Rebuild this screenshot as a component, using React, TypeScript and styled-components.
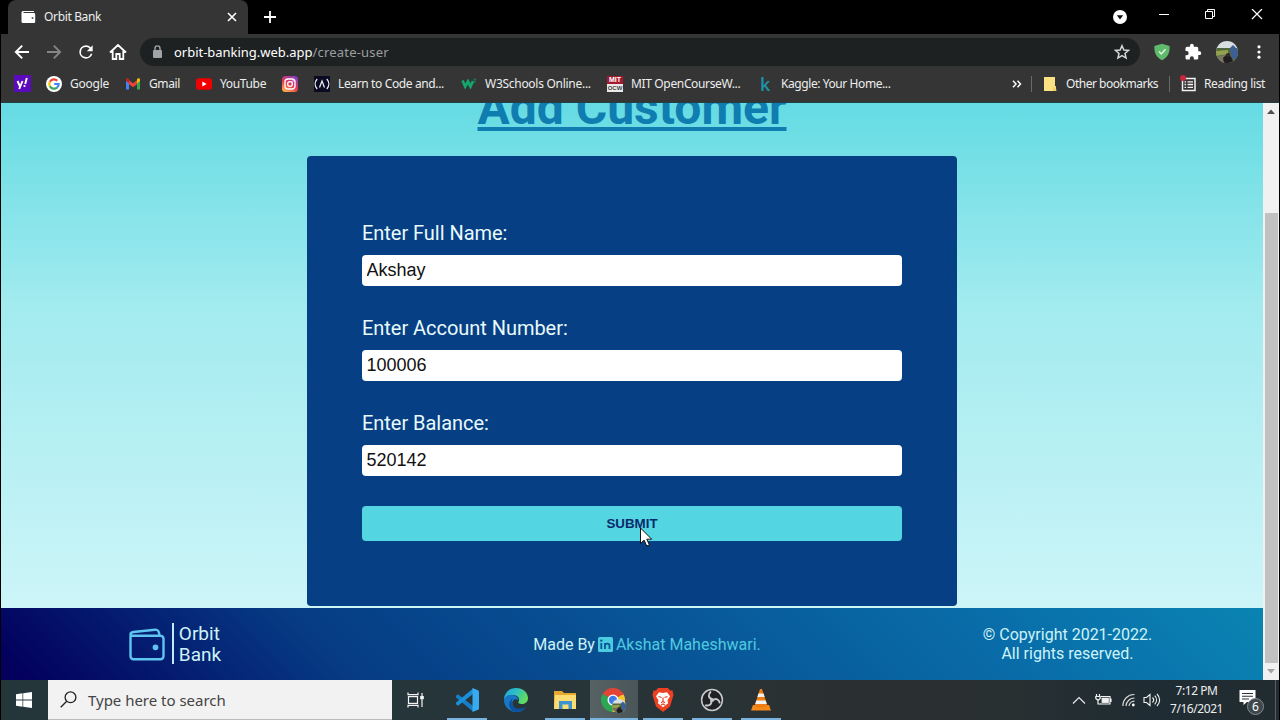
import React from 'react';
import styled, { createGlobalStyle } from 'styled-components';

const Global = createGlobalStyle`
  * { box-sizing: border-box; }
  body { margin: 0; background: #000; overflow: hidden; }
  svg { display: block; flex: none; }
`;

const ui = "'Noto Sans', 'Open Sans', sans-serif";

const Screen = styled.div`
  position: relative;
  width: 1280px;
  height: 720px;
  padding: 0 1px;
  display: flex;
  flex-direction: column;
  background: #000;
  overflow: hidden;
  font-family: ${ui};
`;

/* ---------- browser chrome ---------- */

const TabStrip = styled.div`
  height: 34px;
  flex: none;
  display: flex;
  background: #000;
`;

const Tab = styled.div`
  margin-left: 7px;
  width: 240px;
  display: flex;
  align-items: center;
  padding: 0 11px 0 13px;
  border-radius: 8px 8px 0 0;
  background: #353535;
`;

const Text = styled.span<{ $size: number; $space?: number; $color?: string }>`
  font-size: ${p => p.$size}px;
  letter-spacing: ${p => p.$space ?? 0}px;
  color: ${p => p.$color ?? '#eceeee'};
  flex: none;
  white-space: nowrap;
  line-height: 18px;
`;

const Grow = styled.div`
  flex: 1;
`;

const Gap = styled.div<{ $w: number }>`
  width: ${p => p.$w}px;
  flex: none;
`;

const NewTab = styled.div`
  width: 44px;
  display: flex;
  align-items: center;
  justify-content: center;
`;

const WindowButtons = styled.div`
  display: flex;
  align-items: center;
  padding-right: 16px;
`;

const Toolbar = styled.div`
  height: 36px;
  flex: none;
  display: flex;
  align-items: center;
  padding: 0 13px 0 5px;
  background: #353535;
`;

const NavButtons = styled.div`
  display: flex;
  width: 134px;
`;

const NavButton = styled.div`
  width: 32px;
  height: 28px;
  display: flex;
  align-items: center;
  justify-content: center;
`;

const AddressBar = styled.div`
  width: 1000px;
  height: 28px;
  display: flex;
  align-items: center;
  padding: 0 9px 0 11px;
  border-radius: 14px;
  background: #1e2122;
`;

const UrlLine = styled.div`
  margin-left: 11px;
  display: flex;
`;

const Extensions = styled.div`
  display: flex;
  align-items: center;
  flex: 1;
  justify-content: space-between;
  padding-left: 14px;
`;

const BookmarkBar = styled.div`
  height: 33px;
  flex: none;
  display: flex;
  align-items: center;
  padding: 0 0 5px 13px;
  background: #353535;
  border-bottom: 1px solid #234145;
`;

const Bookmark = styled.div<{ $w: number; $gap?: number }>`
  width: ${p => p.$w}px;
  flex: none;
  display: flex;
  align-items: center;
  gap: ${p => p.$gap ?? 8}px;
`;

const Divider = styled.div<{ $mr: number }>`
  width: 1px;
  height: 16px;
  margin-right: ${p => p.$mr}px;
  background: #6a6a6a;
`;

/* ---------- web page ---------- */

const Viewport = styled.div`
  height: 577px;
  flex: none;
  display: flex;
`;

const Page = styled.div`
  flex: 1;
  display: flex;
  flex-direction: column;
  overflow: hidden;
  font-family: Roboto, sans-serif;
`;

const Main = styled.main`
  height: 505px;
  flex: none;
  display: flex;
  flex-direction: column;
  align-items: center;
  overflow: hidden;
  background: linear-gradient(#65dbe3 0%, #a2ebef 40%, #cdf5f8 100%);
`;

const Title = styled.h1`
  margin: -23px 0 0;
  height: 76px;
  flex: none;
  line-height: 56px;
  font-size: 48px;
  font-weight: 700;
  color: #0f7db0;
  text-decoration: underline;
  text-decoration-thickness: 4px;
  text-underline-offset: 3px;
  text-decoration-skip-ink: none;
`;

const Form = styled.form`
  width: 650px;
  height: 450px;
  flex: none;
  padding: 62px 55px;
  border-radius: 4px;
  background: #063f84;
`;

const Field = styled.label`
  display: flex;
  flex-direction: column;
  height: 95px;
`;

const Caption = styled.span`
  height: 37px;
  line-height: 30px;
  font-size: 20px;
  letter-spacing: -0.04px;
  color: #e9fafb;
`;

const Input = styled.input`
  width: 540px;
  height: 31px;
  padding: 0 4.5px;
  border: 0;
  border-radius: 4px;
  outline: 0;
  background: #fff;
  color: #111;
  font: 18px 'Liberation Sans', Arial, sans-serif;
`;

const Submit = styled.button`
  display: block;
  width: 540px;
  height: 35px;
  margin-top: 3px;
  padding: 0 0 1px;
  border: 0;
  border-radius: 4px;
  background: #53d6e1;
  color: #0a2a6c;
  font: bold 13.33px 'Liberation Sans', Arial, sans-serif;
`;

const Footer = styled.footer`
  height: 72px;
  display: flex;
  align-items: center;
  background: linear-gradient(45deg, #03005e 2%, #063c84 27%, #085596 53%, #096faa 80%, #0a84b2 100%);
`;

const FooterCell = styled.div`
  display: flex;
  align-items: center;
  justify-content: center;
  font-size: 16px;
  line-height: 19px;
  color: #cdf3f8;
`;

const Brand = styled(FooterCell)`
  width: 348px;
  gap: 7px;
`;

const BrandName = styled.div`
  height: 41px;
  margin-top: -1px;
  padding-left: 5px;
  border-left: 2px solid #c2eaf6;
  font-size: 19px;
  line-height: 21px;
`;

const Credit = styled(FooterCell)`
  width: 596px;
  gap: 3px;
`;

const Link = styled.a`
  display: flex;
  align-items: center;
  gap: 3px;
  color: #4dcbe0;
`;

const Copyright = styled(FooterCell)`
  width: 245px;
  text-align: center;
`;

const ScrollTrack = styled.div`
  width: 16px;
  display: flex;
  flex-direction: column;
  align-items: center;
  justify-content: space-between;
  padding: 6px 0;
  background: #f1f1f1;
`;

const ScrollThumb = styled.div`
  width: 13px;
  height: 450px;
  margin-top: 92px;
  background: #c1c1c1;
`;

/* ---------- taskbar ---------- */

const Taskbar = styled.div`
  height: 40px;
  flex: none;
  display: flex;
  background: linear-gradient(90deg, #25363b 0%, #27353a 45%, #2a3031 65%, #293031 78%, #1f2c33 90%, #222c31 100%);
`;

const Start = styled.div`
  width: 47px;
  padding-right: 1px;
  display: flex;
  align-items: center;
  justify-content: center;
`;

const Search = styled.div`
  width: 344px;
  display: flex;
  align-items: center;
  gap: 11px;
  padding-left: 12px;
  background: #f2f2f2;
  border-bottom: 1px solid #bbb;
`;

const TaskView = styled.div`
  width: 50px;
  padding-right: 3px;
  display: flex;
  align-items: center;
  justify-content: center;
`;

const TaskApp = styled.div<{ $active?: boolean; $open?: boolean }>`
  width: ${p => (p.$active ? 48 : 49)}px;
  margin-left: ${p => (p.$active ? 1 : 0)}px;
  display: flex;
  flex-direction: column;
  align-items: center;
  justify-content: space-between;
  padding-top: 8px;
  background: ${p => (p.$active ? 'linear-gradient(90deg, #566263, #4a5557)' : 'transparent')};

  &::after {
    content: '';
    width: ${p => (p.$active ? 48 : 40)}px;
    height: 2px;
    background: ${p => (p.$open ? '#79b4e0' : 'transparent')};
  }
`;

const Tray = styled.div`
  margin-left: auto;
  display: flex;
  align-items: center;
`;

const Clock = styled.div`
  width: 71px;
  display: flex;
  flex-direction: column;
  align-items: center;
`;

const ShowDesktop = styled.div`
  width: 4px;
  height: 40px;
  margin-left: 11px;
  border-left: 1px solid #566065;
`;

const Notice = styled.div`
  position: relative;
  width: 25px;
  height: 26px;
`;

const Count = styled.span`
  position: absolute;
  right: 0;
  bottom: -2px;
  width: 17px;
  height: 17px;
  border: 1px solid #858b8e;
  border-radius: 50%;
  background: #3e474c;
  color: #fff;
  font-size: 12px;
  line-height: 15px;
  text-align: center;
`;

const Pointer = styled.div`
  position: absolute;
  left: 639px;
  top: 527px;
`;

/* ---------- icons ---------- */

const line = { fill: 'none', stroke: '#fff', strokeWidth: 1.8 } as const;

const WalletTab = () => (
  <svg width="15" height="14" viewBox="0 0 15 14">
    <path d="M2 1h11v1H2.5v1H13a1.2 1.2 0 0 1 1.2 1.2v7.5A1.2 1.2 0 0 1 13 13H2a1.5 1.5 0 0 1-1.500-1.500v-9A1.500 1.500 0 0 1 2 1z" fill="#fff" />
    <circle cx="11.5" cy="8" r="1" fill="#555" />
  </svg>
);

const Back = () => (
  <svg width="16" height="16" viewBox="0 0 16 16">
    <path d="M15 8H2M8.2 1.6L1.8 8l6.4 6.4" {...line} strokeWidth="1.9" />
  </svg>
);

const Forward = () => (
  <svg width="16" height="16" viewBox="0 0 16 16">
    <path d="M1 8h13M7.8 1.6L14.2 8l-6.4 6.4" fill="none" stroke="#858585" strokeWidth="1.8" />
  </svg>
);

const Reload = () => (
  <svg width="20" height="20" viewBox="0 0 24 24">
    <path d="M17.65 6.35A7.96 7.96 0 0 0 12 4a8 8 0 1 0 7.73 10h-2.08A6 6 0 1 1 12 6c1.66 0 3.14.69 4.22 1.78L13 11h7V4l-2.35 2.35z" fill="#fff" />
  </svg>
);

const Home = () => (
  <svg width="18" height="18" viewBox="0 0 18 18">
    <path d="M1 9.5L9 2l8 7.5M3.7 8v8h3.6v-5h3.4v5h3.6V8" {...line} />
  </svg>
);

const Lock = () => (
  <svg width="12" height="14" viewBox="0 0 12 14">
    <rect x="2" y="5" width="9" height="8" rx="1" fill="#a0a4a7" />
    <path d="M4 6V3.4a2.5 2.5 0 0 1 5 0V6" fill="none" stroke="#a0a4a7" strokeWidth="1.4" />
  </svg>
);

const Star = () => (
  <svg width="18" height="18" viewBox="0 0 24 24">
    <path d="M12 3.6l2.5 5.7 6.2.6-4.7 4.1 1.4 6.1L12 16.9l-5.4 3.2L8 14 3.3 9.9l6.2-.6z" fill="none" stroke="#d5d7d9" strokeWidth="2" />
  </svg>
);

const Shield = () => (
  <svg width="16" height="18" viewBox="0 0 16 18">
    <path d="M8 .8l7.6 2.1c.4 6-1.300 11-7.600 14.400C1.700 13.900 0 8.900.4 2.900z" fill="#5fbb6b" />
    <path d="M5 8.500l2.300 2.400L11.500 6.200" fill="none" stroke="#e4f6e5" strokeWidth="1.500" />
  </svg>
);

const Puzzle = () => (
  <svg width="18" height="18" viewBox="0 0 24 24">
    <path d="M20.500 11H19V7a2 2 0 0 0-2-2h-4V3.500a2.500 2.500 0 0 0-5 0V5H4a2 2 0 0 0-2 2v3.800h1.500a2.700 2.700 0 0 1 0 5.400H2V20a2 2 0 0 0 2 2h3.800v-1.500a2.700 2.700 0 0 1 5.400 0V22H17a2 2 0 0 0 2-2v-4h1.500a2.500 2.500 0 0 0 0-5z" fill="#fff" />
  </svg>
);

const Avatar = ({ size }: { size: number }) => (
  <svg width={size} height={size} viewBox="0 0 22 22">
    <clipPath id={`face${size}`}><circle cx="11" cy="11" r="11" /></clipPath>
    <g clipPath={`url(#face${size})`}>
      <rect width="22" height="22" fill="#d8dde0" />
      <path d="M0 7h22v15H0z" fill="#51663c" />
      <path d="M0 10l12-1v4L0 15z" fill="#93a04e" />
      <path d="M0 16l12-3 2 9H0z" fill="#77775f" />
      <path d="M14 7l3-3 3 3 2 3v7l-6 1z" fill="#3c5f96" />
      <path d="M7 17l3-3 2-1 3 3 3 6H8z" fill="#201c20" />
      <circle cx="12" cy="14" r="2" fill="#30262a" />
    </g>
  </svg>
);

const Yahoo = () => (
  <svg width="17" height="17" viewBox="0 0 17 17">
    <rect width="17" height="17" fill="#5b0bbd" />
    <path d="M3.500 6l2.300 5M8.500 6l-3.300 8M12.800 3l-1.600 6" stroke="#fff" strokeWidth="1.900" fill="none" />
    <circle cx="10.500" cy="11" r="1.100" fill="#fff" />
  </svg>
);

const GoogleG = () => (
  <svg width="16" height="16" viewBox="0 0 16 16">
    <circle cx="8" cy="8" r="8" fill="#fff" />
    <g fill="none" strokeWidth="2.200">
      <path d="M11.300 4.700A4.700 4.700 0 0 0 3.900 5.700" stroke="#ea4335" />
      <path d="M3.900 5.700a4.700 4.700 0 0 0 0 4.600" stroke="#fbbc05" />
      <path d="M3.900 10.300a4.700 4.700 0 0 0 7.100 1.300" stroke="#34a853" />
      <path d="M11 11.600A4.700 4.700 0 0 0 12.700 8H8.200" stroke="#4285f4" />
    </g>
  </svg>
);

const GmailM = () => (
  <svg width="16" height="16" viewBox="0 0 16 16">
    <path d="M1 13.500V4l3 2.300v7.200z" fill="#4285f4" />
    <path d="M12 13.500V6.300L15 4v9.500z" fill="#34a853" />
    <path d="M4 10V4.200l4 3 4-3V10l-4 3z" fill="#ea4335" />
    <path d="M1 5V3.700c0-1.400 1.500-1.900 3-.7v4.300z" fill="#c5221f" />
    <path d="M15 5V3.700c0-1.400-1.500-1.900-3-.7v4.300z" fill="#fbbc04" />
    <path d="M4 13.500V8.200l4 3 4-3v5.300z" fill="#353535" />
  </svg>
);

const YouTube = () => (
  <svg width="16" height="16" viewBox="0 0 16 16">
    <rect y="2.300" width="16" height="11.400" rx="2.500" fill="#f00000" />
    <path d="M6.300 5.500v5l4.400-2.500z" fill="#fff" />
  </svg>
);

const Instagram = () => (
  <svg width="16" height="16" viewBox="0 0 16 16">
    <defs>
      <linearGradient id="insta" x1="0.200" y1="1" x2="0.800" y2="0">
        <stop offset="0" stopColor="#fdb44e" />
        <stop offset=".45" stopColor="#e8394f" />
        <stop offset="1" stopColor="#8a3ac8" />
      </linearGradient>
    </defs>
    <rect width="16" height="16" rx="3.500" fill="url(#insta)" />
    <rect x="3" y="3" width="10" height="10" rx="3" fill="none" stroke="#fff" strokeWidth="1.300" />
    <circle cx="8" cy="8" r="2.400" fill="none" stroke="#fff" strokeWidth="1.300" />
    <circle cx="11" cy="5" r=".7" fill="#fff" />
  </svg>
);

const CodeCamp = () => (
  <svg width="16" height="16" viewBox="0 0 16 16">
    <rect width="16" height="16" fill="#0a0a23" />
    <path d="M3.200 3c-2.700 3-2.700 7 0 10M12.800 3c2.700 3 2.700 7 0 10M5.500 11.500L8 5l2.500 6.500" fill="none" stroke="#e8e8f0" strokeWidth="1.300" />
  </svg>
);

const W3 = () => (
  <svg width="16" height="16" viewBox="0 0 16 16">
    <path d="M1.500 4.500l2.700 6L7 5.500l2.500 5 2.500-5.500" fill="none" stroke="#12a86c" strokeWidth="2.700" />
    <path d="M12.500 3.200h2.500l-1.500 1.500c1.500 0 1.500 2-.5 1.700" fill="none" stroke="#0d8f5e" strokeWidth="1" />
  </svg>
);

const MitBox = styled.div`
  width: 16px;
  height: 16px;
  flex: none;
  display: flex;
  flex-direction: column;
  background: #a51931;
`;

const MitLine = styled.div<{ $lower?: boolean }>`
  height: 8px;
  font: bold ${p => (p.$lower ? 6 : 7)}px/8px 'Liberation Sans', Arial, sans-serif;
  text-align: center;
  color: ${p => (p.$lower ? '#444' : '#fff')};
  background: ${p => (p.$lower ? '#e9e9e9' : 'transparent')};
`;

const KaggleMark = styled.span`
  width: 16px;
  padding-left: 3px;
  font: 600 18px/16px 'Open Sans', sans-serif;
  color: #1f93a8;
`;

const Folder = () => (
  <svg width="14" height="16" viewBox="0 0 14 16">
    <path d="M1 1h11v9h.8l.6 5H1z" fill="#fbe183" />
    <path d="M10.500 10l2.800 5h-3z" fill="#f0ca58" />
  </svg>
);

const ReadingList = () => (
  <svg width="18" height="18" viewBox="0 0 18 18">
    <rect x="2.500" y="3.500" width="12.500" height="12" fill="none" stroke="#f1f1f1" strokeWidth="1.500" />
    <path d="M7.500 6.800H13M7.500 9.500H13M7.500 12.300H13M4.500 6.800h1.600M4.500 9.500h1.600M4.500 12.300h1.600" stroke="#f1f1f1" strokeWidth="1.300" />
    <circle cx="3" cy="3" r="3" fill="#c4283c" />
  </svg>
);

const WalletOutline = () => (
  <svg width="36" height="33" viewBox="0 0 36 33" fill="none" stroke="#5ec5f2" strokeWidth="2.400" strokeLinecap="round">
    <path d="M1.500 7v20.500a3 3 0 0 0 3 3h27a3 3 0 0 0 3-3v-17.500a3 3 0 0 0-3-3H4.500C.5 7 .5 3.800 4.500 3.200L26 .9c2.500-.3 4 1.500 4.500 5.300" transform="translate(0 .8)" />
    <circle cx="26.500" cy="19.300" r="1.700" fill="#5ec5f2" />
  </svg>
);

const LinkedIn = () => (
  <svg width="15" height="15" viewBox="0 0 15 15">
    <rect width="15" height="15" rx="1.500" fill="#4dcbe0" />
    <path d="M3.300 6v6M7 6v6M7 8.500c0-2.600 4.500-2.600 4.500 0V12" fill="none" stroke="#085696" strokeWidth="1.800" />
    <circle cx="3.300" cy="3.600" r="1.200" fill="#085696" />
  </svg>
);

const Windows = () => (
  <svg width="16" height="16" viewBox="0 0 16 16" fill="#fff">
    <path d="M0 2.200L6.500 1.300V7.600H0zM7.200 1.200L16 0v7.600H7.200zM0 8.400h6.500v6.300L0 13.800zM7.200 8.400H16V16l-8.800-1.200z" />
  </svg>
);

const Magnifier = () => (
  <svg width="17" height="17" viewBox="0 0 17 17" fill="none" stroke="#222" strokeWidth="1.300">
    <circle cx="10.500" cy="6.300" r="5.400" />
    <path d="M6.700 10.200L.7 16.200" />
  </svg>
);

const TaskViewIcon = () => (
  <svg width="17" height="16" viewBox="0 0 17 16" fill="none" stroke="#f4f4f4" strokeWidth="1.200">
    <rect x="1.500" y="4.600" width="9" height="6.800" />
    <path d="M1 .5v2.200h10V.5M1 15.500v-2.200h10v2.200M15 1v14" />
    <rect x="13.800" y="4.600" width="2.400" height="2" fill="#fff" />
  </svg>
);

const VSCode = () => (
  <svg width="24" height="24" viewBox="0 0 24 24">
    <path d="M1 7.800l2-1.500L18 18v5.500L1 9.500z" fill="#1680c7" />
    <path d="M1 16.200l2 1.500L18 6V.5L1 14.500z" fill="#1b8fd8" />
    <path d="M17.500 0L23 2.300q1 .5 1 1.500v16.400q0 1-1 1.500L17.500 24z" fill="#38aaf0" />
  </svg>
);

const Edge = () => (
  <svg width="24" height="24" viewBox="0 0 24 24">
    <defs>
      <linearGradient id="edgeTop" x1="0" y1="0" x2="1" y2=".4">
        <stop offset="0" stopColor="#239fd9" />
        <stop offset=".5" stopColor="#2dbfc9" />
        <stop offset="1" stopColor="#60dc5e" />
      </linearGradient>
    </defs>
    <path d="M0 12C0 5 5 0 12 0s12 4.600 12 10c0 4-3 6-6.500 6-2.800 0-3.700-1-3-2.200C16.500 10.500 13.500 7 9 7c-5 0-8.500 3-9 5z" fill="url(#edgeTop)" />
    <path d="M0 12c1-3.700 5-6 9-5 4 1 5.500 3.500 5.500 5.300C10 9 7 14 9 18c2.200 4 8 4.500 12.500 1.200C18 24.500 12 25 7.500 23 3 21 0 17 0 12z" fill="#1779c6" />
    <path d="M9 10c-3.500 5 .5 11 6 10.500 2.500 0 4.500-.5 6.700-1.500-3 4.500-8 6-13 4.200C4 20 4 13 9 10z" fill="#0d509d" />
  </svg>
);

const Explorer = () => (
  <svg width="24" height="24" viewBox="0 0 24 24">
    <path d="M1 3h8l2 2h12v16H1z" fill="#e6a92f" />
    <path d="M2 7h21v14H1z" fill="#fbdc73" />
    <path d="M6 21v-8h13v8h-3.500v-4.500h-6V21z" fill="#3c93cf" />
  </svg>
);

const Chrome = () => (
  <svg width="26" height="25" viewBox="0 0 26 25">
    <path d="M12 12L1.600 6A12 12 0 0 1 22.400 6z" fill="#e24435" />
    <path d="M12 12l-.5 12A12 12 0 0 1 1.600 6z" fill="#2da652" />
    <path d="M12 12L22.400 6a12 12 0 0 1-10.900 18z" fill="#f6c62e" />
    <path d="M12 6h10.500" stroke="#e24435" strokeWidth="2" />
    <circle cx="12" cy="12" r="5.500" fill="#fff" />
    <circle cx="12" cy="12" r="4.200" fill="#3e7de8" />
    <g transform="translate(11 11)"><Avatar size={14} /></g>
  </svg>
);

const Brave = () => (
  <svg width="22" height="24" viewBox="0 0 22 24">
    <path d="M6 0h10l2 2.500h2.500L21.500 7 18 18.500 11 24 4 18.500.5 7l1-4.500H4z" fill="#ee4023" />
    <path d="M11 5l4-.7 3 4-2.500 4 .6 3-5.100 4-5.100-4 .6-3L4 8.300l3-4z" fill="#fff" />
    <path d="M6.500 8.500l3 1M15.500 8.500l-3 1M11 9.500v4l-2 1.200M11 13.500l2 1.200M9 17l2-1 2 1" stroke="#ee4023" strokeWidth="1.200" fill="none" />
  </svg>
);

const Obs = () => (
  <svg width="24" height="24" viewBox="0 0 24 24">
    <circle cx="12" cy="12" r="10.400" fill="#202124" stroke="#c9c9cc" strokeWidth="1.500" />
    <g fill="none" stroke="#c6c6ca" strokeWidth="1.900">
      <path d="M12 11c-4-1-4-5-1-7.500" />
      <path d="M12 11c-4-1-4-5-1-7.500" transform="rotate(120 12 12)" />
      <path d="M12 11c-4-1-4-5-1-7.500" transform="rotate(240 12 12)" />
    </g>
    <circle cx="12" cy="12" r="2" fill="#c6c6ca" />
  </svg>
);

const Vlc = () => (
  <svg width="22" height="24" viewBox="0 0 22 24">
    <path d="M3 17h16l2 5.500H1z" fill="#f58a1c" />
    <path d="M10 1h2l5.500 17c-3 2-10 2-13 0z" fill="#ef7d14" />
    <path d="M8.500 5.500h5L14.700 9H7.300zM6.300 12.500h9.400l1.100 3.500H5.200z" fill="#f2f2f2" />
  </svg>
);

const Chevron = () => (
  <svg width="14" height="9" viewBox="0 0 14 9"><path d="M1 7.500l6-6 6 6" fill="none" stroke="#e8e8e8" strokeWidth="1.200" /></svg>
);

const Battery = () => (
  <svg width="17" height="14" viewBox="0 0 17 14" fill="none" stroke="#f2f2f2" strokeWidth="1.200">
    <path d="M6 3.500h9v7.500H5M16 5.500v3.500" />
    <rect x="7.200" y="5.300" width="6" height="4" fill="#f2f2f2" />
    <path d="M1.500 1v2.500M4.500 1v2.500M.8 3.500h4.400v2L3.700 6.800H2.300L.8 5.500zM3 7v4h2.500" />
  </svg>
);

const Wifi = () => (
  <svg width="14" height="14" viewBox="0 0 14 14" fill="none" stroke="#d8d8d8" strokeWidth="1.200">
    <path d="M1 13A11 11 0 0 1 12.500 1.500M4 13a8.500 8.500 0 0 1 8.500-8M7 13a5.500 5.500 0 0 1 5.500-4.800" />
    <circle cx="11.300" cy="12" r="1.400" fill="#fff" stroke="none" />
  </svg>
);

const Speaker = () => (
  <svg width="18" height="16" viewBox="0 0 18 16" fill="none" stroke="#f2f2f2" strokeWidth="1.100">
    <path d="M1 5.500h2.500L7 2.500v11L3.500 10.500H1zM9.500 5.500c1.500 1.500 1.500 3.500 0 5M11.700 3.700c2.500 2.500 2.500 6 0 8.600M14 2c3.500 3.500 3.500 8.500 0 12" />
  </svg>
);

const fields = [
  ['Enter Full Name:', 'Akshay'],
  ['Enter Account Number:', '100006'],
  ['Enter Balance:', '520142'],
];

export default function App() {
  return (
    <Screen>
      <Global />
      <TabStrip>
        <Tab>
          <WalletTab />
          <Gap $w={8} />
          <Text $size={12} $space={-0.35}>Orbit Bank</Text>
          <Grow />
          <svg width="10" height="10" viewBox="0 0 10 10"><path d="M1 1l8 8M9 1L1 9" {...line} strokeWidth="1.600" /></svg>
        </Tab>
        <NewTab>
          <svg width="14" height="14" viewBox="0 0 14 14"><path d="M7 1v12M1 7h12" {...line} /></svg>
        </NewTab>
        <Grow />
        <WindowButtons>
          <svg width="14" height="14" viewBox="0 0 14 14"><circle cx="7" cy="7" r="7" fill="#fff" /><path d="M3.800 5.200h6.400L7 9.500z" fill="#111" /></svg>
          <Gap $w={32} />
          <svg width="10" height="14" viewBox="0 0 10 14"><path d="M0 4.500h10" {...line} strokeWidth="1" /></svg>
          <Gap $w={36} />
          <svg width="10" height="16" viewBox="0 0 10 16"><path d="M.5 2.500h7v7h-7zM2.500 2.500V.5h7v7h-2" {...line} strokeWidth="1" /></svg>
          <Gap $w={36} />
          <svg width="12" height="16" viewBox="0 0 12 16"><path d="M1 0l10 10M11 0L1 10" {...line} strokeWidth="1.200" /></svg>
        </WindowButtons>
      </TabStrip>

      <Toolbar>
        <NavButtons>
          <NavButton><Back /></NavButton>
          <NavButton><Forward /></NavButton>
          <NavButton><Reload /></NavButton>
          <NavButton><Home /></NavButton>
        </NavButtons>
        <AddressBar>
          <Lock />
          <UrlLine>
            <Text $size={13} $space={-0.02} $color="#fff">orbit-banking.web.app</Text>
            <Text $size={13} $space={0.2} $color="#9a9ea1">/create-user</Text>
          </UrlLine>
          <Grow />
          <Star />
        </AddressBar>
        <Extensions>
          <Shield />
          <Puzzle />
          <Avatar size={22} />
          <svg width="14" height="14" viewBox="0 0 14 14" fill="#fff"><circle cx="7" cy="1.800" r="1.600" /><circle cx="7" cy="7" r="1.600" /><circle cx="7" cy="12.200" r="1.600" /></svg>
        </Extensions>
      </Toolbar>

      <BookmarkBar>
        <Bookmark $w={32}><Yahoo /></Bookmark>
        <Bookmark $w={79}><GoogleG /><Text $size={12} $space={-0.25}>Google</Text></Bookmark>
        <Bookmark $w={71}><GmailM /><Text $size={12} $space={-0.4}>Gmail</Text></Bookmark>
        <Bookmark $w={86}><YouTube /><Text $size={12} $space={-0.35}>YouTube</Text></Bookmark>
        <Bookmark $w={32}><Instagram /></Bookmark>
        <Bookmark $w={147}><CodeCamp /><Text $size={12} $space={-0.37}>Learn to Code and...</Text></Bookmark>
        <Bookmark $w={146}><W3 /><Text $size={12} $space={-0.28}>W3Schools Online...</Text></Bookmark>
        <Bookmark $w={150}><MitBox><MitLine>MIT</MitLine><MitLine $lower>OCW</MitLine></MitBox><Text $size={12} $space={-0.35}>MIT OpenCourseW...</Text></Bookmark>
        <Bookmark $w={255}><KaggleMark>k</KaggleMark><Text $size={12} $space={-0.42}>Kaggle: Your Home...</Text></Bookmark>
        <svg width="10" height="8" viewBox="0 0 10 8"><path d="M1 .8L4 4 1 7.200M5.500.8l3 3.200-3 3.200" {...line} strokeWidth="1.500" /></svg>
        <Gap $w={9} />
        <Divider $mr={11} />
        <Bookmark $w={126} $gap={9}><Folder /><Text $size={12} $space={-0.48}>Other bookmarks</Text></Bookmark>
        <Divider $mr={10} />
        <Bookmark $w={90} $gap={6}><ReadingList /><Text $size={12} $space={-0.38}>Reading list</Text></Bookmark>
      </BookmarkBar>

      <Viewport>
        <Page>
          <Main>
            <Title>Add Customer</Title>
            <Form>
              {fields.map(([label, value]) => (
                <Field key={label}>
                  <Caption>{label}</Caption>
                  <Input defaultValue={value} />
                </Field>
              ))}
              <Submit type="button">SUBMIT</Submit>
            </Form>
          </Main>
          <Footer>
            <Brand>
              <WalletOutline />
              <BrandName>Orbit<br />Bank</BrandName>
            </Brand>
            <Credit>
              Made By
              <Link><LinkedIn />Akshat Maheshwari.</Link>
            </Credit>
            <Copyright>© Copyright 2021-2022.<br />All rights reserved.</Copyright>
          </Footer>
        </Page>
        <ScrollTrack>
          <svg width="8" height="5" viewBox="0 0 8 5"><path d="M0 5l4-4.500L8 5z" fill="#505050" /></svg>
          <ScrollThumb />
          <svg width="8" height="5" viewBox="0 0 8 5"><path d="M0 0l4 4.500L8 0z" fill="#a3a3a3" /></svg>
        </ScrollTrack>
      </Viewport>

      <Taskbar>
        <Start><Windows /></Start>
        <Search><Magnifier /><Text $size={15} $space={-0.02} $color="#444">Type here to search</Text></Search>
        <TaskView><TaskViewIcon /></TaskView>
        <TaskApp $open><VSCode /></TaskApp>
        <TaskApp><Edge /></TaskApp>
        <TaskApp $open><Explorer /></TaskApp>
        <TaskApp $open $active><Chrome /></TaskApp>
        <TaskApp $open><Brave /></TaskApp>
        <TaskApp $open><Obs /></TaskApp>
        <TaskApp $open><Vlc /></TaskApp>
        <Tray>
          <Chevron />
          <Gap $w={9} />
          <Battery />
          <Gap $w={10} />
          <Wifi />
          <Gap $w={7} />
          <Speaker />
          <Clock>
            <Text $size={12} $space={-0.45}>7:12 PM</Text>
            <Text $size={12} $space={-0.45}>7/16/2021</Text>
          </Clock>
          <Gap $w={7} />
          <Notice>
            <svg width="17" height="18" viewBox="0 0 17 18"><path d="M.5 3h16v12H8L4.500 18v-3h-4z" fill="#fff" /><path d="M3 6.500h11M3 9.300h11M3 12h7" stroke="#2a343a" strokeWidth="1.100" /></svg>
            <Count>6</Count>
          </Notice>
          <ShowDesktop />
        </Tray>
      </Taskbar>

      <Pointer>
        <svg width="14" height="21" viewBox="0 0 14 21"><path d="M1.500 1v15.500l3.600-3.400 2.600 6 2.700-1.200-2.600-5.700h4.900z" fill="#fff" stroke="#111" strokeWidth="1" /></svg>
      </Pointer>
    </Screen>
  );
}
